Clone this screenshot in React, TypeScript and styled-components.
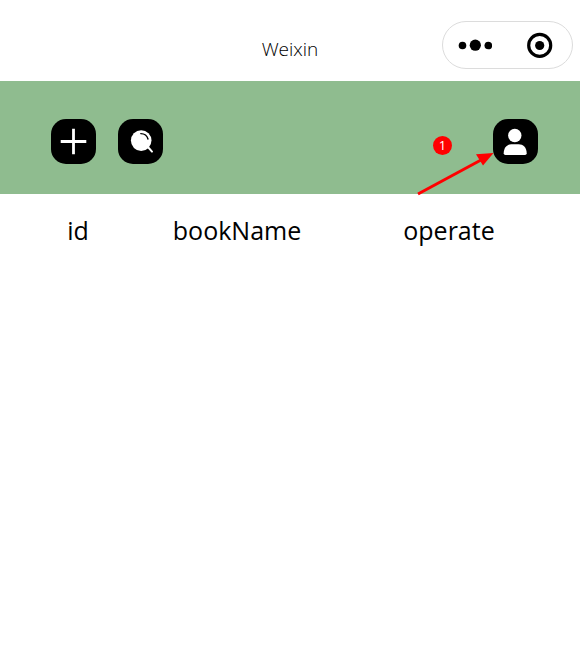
import React from "react";
import styled, { createGlobalStyle } from "styled-components";

const GlobalStyle = createGlobalStyle`
  body {
    margin: 0;
    background: #fff;
    color: #000;
    font-family: "Open Sans", "Noto Sans", sans-serif;
  }
  * {
    box-sizing: border-box;
  }
`;

const NavBar = styled.header`
  display: grid;
  grid-template-columns: 1fr auto 1fr;
  align-items: center;
  height: 81px;
  padding: 16px 7px 8px;
`;

const Title = styled.h1`
  grid-column: 2;
  margin: 0;
  font-size: 19px;
  line-height: 24px;
  font-weight: 300;
  color: #000;
  padding-top: 8px;
`;

const Capsule = styled.div`
  justify-self: end;
  display: flex;
  width: 131px;
  height: 48px;
  border: 1px solid #dcdcdc;
  border-radius: 24px;
  background: #fff;
`;

const CapsuleButton = styled.button`
  flex: 1;
  display: flex;
  align-items: center;
  justify-content: center;
  padding: 0;
  border: 0;
  background: none;
`;

const Toolbar = styled.nav`
  display: flex;
  gap: 22px;
  padding: 38px 42px 30px 51px;
  background: #8fbc8f;
`;

const ToolButton = styled.button`
  display: block;
  width: 45px;
  height: 45px;
  padding: 0;
  border: 0;
  border-radius: 15px;
  background: #000;
  color: #fff;

  svg {
    display: block;
  }
`;

const Profile = styled.div`
  position: relative;
  margin-left: auto;
`;

const Arrow = styled.svg`
  position: absolute;
  right: 44px;
  top: 32px;
  pointer-events: none;
`;

const StepBadge = styled.span`
  position: absolute;
  right: 86px;
  top: 17px;
  width: 19px;
  height: 19px;
  border-radius: 50%;
  background: #f00;
  color: #fff;
  font-size: 13px;
  line-height: 19px;
  text-align: center;
`;

const Content = styled.main`
  padding: 18px 25px;
`;

const BookTable = styled.table`
  width: 100%;
  table-layout: fixed;
  border-collapse: collapse;
`;

const HeadCell = styled.th<{ $width: string }>`
  width: ${(p) => p.$width};
  padding: 0;
  font-size: 25px;
  line-height: 36px;
  font-weight: 400;
  text-align: center;
`;

const columns = [
  { name: "id", width: "20%" },
  { name: "bookName", width: "40%" },
  { name: "operate", width: "40%" },
];

export default function App() {
  return (
    <>
      <GlobalStyle />
      <NavBar>
        <Title>Weixin</Title>
        <Capsule>
          <CapsuleButton type="button" aria-label="More">
            <svg width="34" height="12" viewBox="0 0 34 12">
              <circle cx="4.5" cy="6.5" r="3.8" />
              <circle cx="17.3" cy="6.2" r="5.6" />
              <circle cx="30.3" cy="6.5" r="3.8" />
            </svg>
          </CapsuleButton>
          <CapsuleButton type="button" aria-label="Close">
            <svg width="26" height="26" viewBox="0 0 26 26">
              <circle cx="12.7" cy="13.4" r="11" fill="none" stroke="#000" strokeWidth="3.2" />
              <circle cx="12.7" cy="13.5" r="4.6" />
            </svg>
          </CapsuleButton>
        </Capsule>
      </NavBar>
      <Toolbar>
        <ToolButton type="button" aria-label="Add">
          <svg width="45" height="45" viewBox="0 0 45 45">
            <path d="M22.5 9.7v25.6M9.7 22.5h25.6" stroke="currentColor" strokeWidth="2.8" />
          </svg>
        </ToolButton>
        <ToolButton type="button" aria-label="Search">
          <svg width="45" height="45" viewBox="0 0 45 45">
            <circle cx="23.2" cy="21.6" r="10.3" fill="currentColor" />
            <path d="M22.8 14.6Q28.6 14.8 30 20" fill="none" stroke="#000" strokeWidth="1.4" strokeLinecap="round" />
            <path d="M29.5 27.5L34 32.6" stroke="currentColor" strokeWidth="2" strokeLinecap="round" />
          </svg>
        </ToolButton>
        <Profile>
          <ToolButton type="button" aria-label="Profile">
            <svg width="45" height="45" viewBox="0 0 45 45" fill="currentColor">
              <circle cx="21.8" cy="16.5" r="6.7" />
              <path d="M10.7 34.2C10.7 28.6 14 25.3 18.3 25.3h7.4C30 25.3 33.7 28.6 33.7 34.2Q33.7 36 32 36H12.4Q10.7 36 10.7 34.2Z" />
            </svg>
          </ToolButton>
          <StepBadge>1</StepBadge>
          <Arrow width="78" height="46" viewBox="0 0 78 46" aria-hidden="true">
            <path d="M2 43L65 9" stroke="#f00" strokeWidth="3" />
            <path d="M77.5 2L60 3.2L67 14.5Z" fill="#f00" />
          </Arrow>
        </Profile>
      </Toolbar>
      <Content>
        <BookTable>
          <thead>
            <tr>
              {columns.map((column) => (
                <HeadCell key={column.name} scope="col" $width={column.width}>
                  {column.name}
                </HeadCell>
              ))}
            </tr>
          </thead>
        </BookTable>
      </Content>
    </>
  );
}
